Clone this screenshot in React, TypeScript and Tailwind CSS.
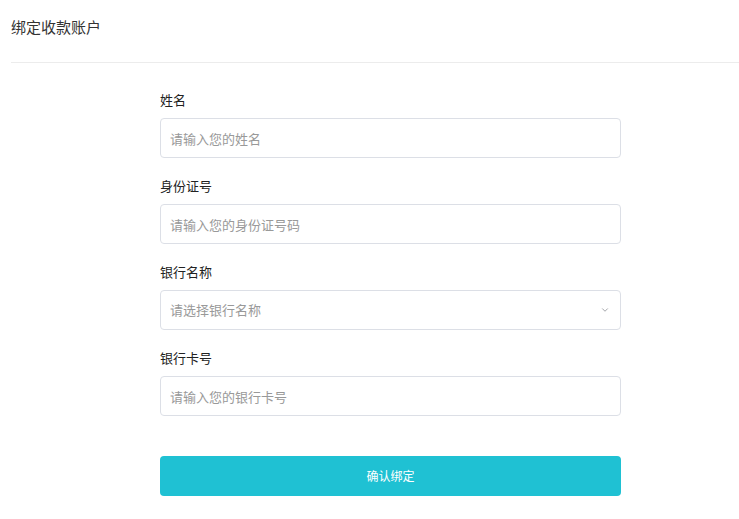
import { ChevronDown } from "lucide-react";

const fields = [
  { label: "姓名", placeholder: "请输入您的姓名" },
  { label: "身份证号", placeholder: "请输入您的身份证号码" },
  { label: "银行名称", placeholder: "请选择银行名称", select: true },
  { label: "银行卡号", placeholder: "请输入您的银行卡号" },
];

export default function App() {
  return (
    <div className="min-h-screen bg-white text-[#333] font-['Noto_Sans_CJK_SC',sans-serif]">
      <div className="ml-[11px]">
        <div className="h-[63px] pt-[16px] border-b border-[#ececec]">
          <h1 className="text-[15px] leading-[22px] font-normal text-[#333]">绑定收款账户</h1>
        </div>
      </div>
      <div className="w-[461px] ml-[160px] pt-[27px]">
        {fields.map((f) => (
          <div key={f.label} className="mb-[18px]">
            <label className="block text-[13px] leading-[20px] mb-[8px] text-[#222]">{f.label}</label>
            {f.select ? (
              <div className="h-[40px] border border-[#dcdfe6] rounded-[4px] flex items-center justify-between pl-[9px] pr-[10px] text-[13px] text-[#999]">
                <span>{f.placeholder}</span>
                <ChevronDown className="w-[10px] h-[10px] text-[#909399]" strokeWidth={2} />
              </div>
            ) : (
              <input
                className="w-full h-[40px] border border-[#dcdfe6] rounded-[4px] px-[9px] text-[13px] outline-none placeholder:text-[#999]"
                placeholder={f.placeholder}
              />
            )}
          </div>
        ))}
        <button className="mt-[22px] w-full h-[40px] rounded-[4px] bg-[#1fc1d3] text-white text-[12px]">
          确认绑定
        </button>
      </div>
    </div>
  );
}
